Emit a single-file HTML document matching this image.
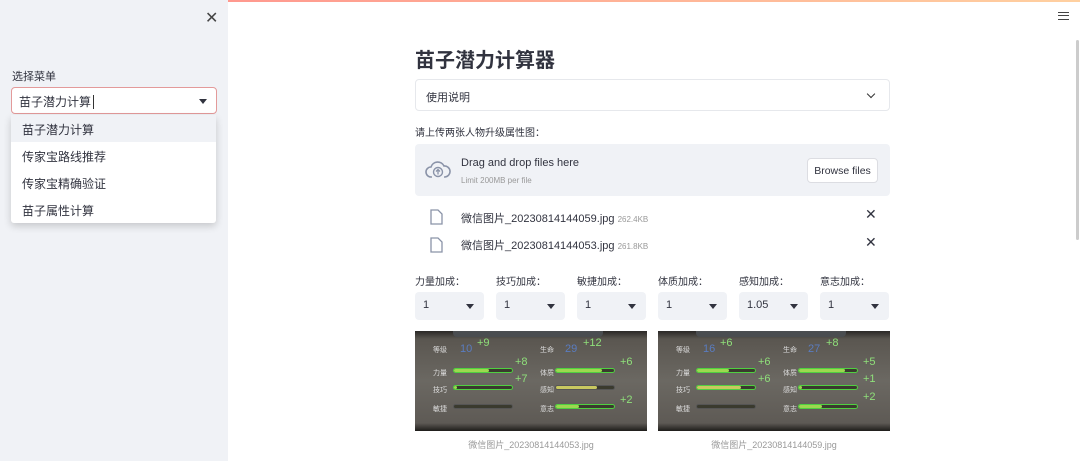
<!DOCTYPE html>
<html><head><meta charset="utf-8"><style>
*{box-sizing:border-box;margin:0;padding:0}
body{width:1080px;height:461px;overflow:hidden;background:#fff;font-family:"Liberation Sans","Noto Sans CJK SC",sans-serif;color:#31333f;position:relative}
.topbar{position:absolute;left:0;top:0;width:1080px;height:2px;background:linear-gradient(90deg,#ff8a8a,#ffd0a0)}
.side{position:absolute;left:0;top:0;width:228px;height:461px;background:#f0f2f6}
.abs{position:absolute}
.sel{position:absolute;background:#f0f2f6;border-radius:4px;height:28px;font-size:11px;color:#31333f;padding:7px 8px}
.sel:after{content:"";position:absolute;right:10px;top:12px;border:4px solid transparent;border-top:5px solid #31333f}
.game{position:absolute;top:331px;width:232px;height:100px;background:linear-gradient(180deg,#2a2826 0,#5a5650 8%,#6b6862 50%,#5e5a55 92%,#1e1c1a 100%)}
.bar{position:absolute;height:5px;border-radius:3px;background:#3a3a2e;border:1px solid #4fd040}
.bar i{display:block;height:100%;background:#9cd850;border-radius:3px}
.g{position:absolute;color:#8fe07a;font-size:11px}
.w{position:absolute;color:#ddd;font-size:7px}
</style></head><body>
<div class="topbar"></div>
<div class="side">
 <div class="abs" style="left:205px;top:8px;font-size:16px;color:#444">✕</div>
 <div class="abs" style="left:12px;top:68px;font-size:11px">选择菜单</div>
 <div class="abs" style="left:11px;top:87px;width:206px;height:27px;background:#fff;border:1px solid #e39a9a;border-radius:4px;font-size:12px;padding:5px 7px">苗子潜力计算<span style="border-left:1px solid #333;margin-left:2px"></span>
  <div class="abs" style="right:9px;top:11px;border:4px solid transparent;border-top:5px solid #31333f"></div></div>
 <div class="abs" style="left:11px;top:115px;width:205px;height:108px;background:#fff;border-radius:3px;box-shadow:0 3px 8px rgba(0,0,0,.18);font-size:12px">
  <div style="height:27px;background:#f0f2f6;padding:6px 11px">苗子潜力计算</div>
  <div style="height:27px;padding:6px 11px">传家宝路线推荐</div>
  <div style="height:27px;padding:6px 11px">传家宝精确验证</div>
  <div style="height:27px;padding:6px 11px">苗子属性计算</div>
 </div>
</div>
<div class="abs" style="left:1058px;top:12px;width:11px;height:8px;border-top:1.5px solid #444;border-bottom:1.5px solid #444"><div style="margin-top:2px;border-top:1.5px solid #444"></div></div>
<div class="abs" style="left:1076px;top:40px;width:3px;height:200px;background:#ccc;border-radius:2px"></div>
<div class="abs" style="left:415px;top:44px;font-size:20px;font-weight:bold">苗子潜力计算器</div>
<div class="abs" style="left:415px;top:79px;width:475px;height:32px;border:1px solid #e6e8ec;border-radius:4px;font-size:11px;padding:9px 10px">使用说明
 <div class="abs" style="right:15px;top:11px;width:6px;height:6px;border-right:1.5px solid #333;border-bottom:1.5px solid #333;transform:rotate(45deg)"></div></div>
<div class="abs" style="left:415px;top:124px;font-size:10px">请上传两张人物升级属性图：</div>
<div class="abs" style="left:415px;top:144px;width:475px;height:52px;background:#f0f2f6;border-radius:4px">
 <svg class="abs" style="left:10px;top:16px" width="26" height="20" viewBox="0 0 26 20"><path d="M7 17H6a5 5 0 0 1 0-10 7 7 0 0 1 13-1 5.5 5.5 0 0 1 1 11h-1" fill="none" stroke="#8a93a8" stroke-width="1.6"/><circle cx="13" cy="12" r="4.5" fill="none" stroke="#8a93a8" stroke-width="1.4"/><path d="M13 14.5v-5M11 11.5l2-2 2 2" fill="none" stroke="#8a93a8" stroke-width="1.3"/></svg>
 <div class="abs" style="left:46px;top:13px;font-size:11px">Drag and drop files here</div>
 <div class="abs" style="left:46px;top:32px;font-size:8px;color:#999">Limit 200MB per file</div>
 <div class="abs" style="left:392px;top:14px;width:71px;height:25px;background:#fff;border:1px solid #dcdde2;border-radius:4px;font-size:10.5px;padding:6px 0;text-align:center">Browse files</div>
</div>
<svg class="abs" style="left:430px;top:209px" width="13" height="16"><path d="M1 1h7l4 4v10H1z" fill="none" stroke="#8a93a8" stroke-width="1.3"/></svg>
<div class="abs" style="left:461px;top:210px;font-size:11px">微信图片_20230814144059.jpg <span style="font-size:8px;color:#999">262.4KB</span></div>
<div class="abs" style="left:865px;top:206px;font-size:14px">✕</div>
<svg class="abs" style="left:430px;top:237px" width="13" height="16"><path d="M1 1h7l4 4v10H1z" fill="none" stroke="#8a93a8" stroke-width="1.3"/></svg>
<div class="abs" style="left:461px;top:237px;font-size:11px">微信图片_20230814144053.jpg <span style="font-size:8px;color:#999">261.8KB</span></div>
<div class="abs" style="left:865px;top:234px;font-size:14px">✕</div>
<div class="abs" style="top:273px;left:415px;font-size:10px">力量加成：</div>
<div class="abs" style="top:273px;left:496px;font-size:10px">技巧加成：</div>
<div class="abs" style="top:273px;left:577px;font-size:10px">敏捷加成：</div>
<div class="abs" style="top:273px;left:658px;font-size:10px">体质加成：</div>
<div class="abs" style="top:273px;left:739px;font-size:10px">感知加成：</div>
<div class="abs" style="top:273px;left:820px;font-size:10px">意志加成：</div>
<div class="sel" style="left:415px;top:292px;width:69px">1</div>
<div class="sel" style="left:496px;top:292px;width:69px">1</div>
<div class="sel" style="left:577px;top:292px;width:69px">1</div>
<div class="sel" style="left:658px;top:292px;width:69px">1</div>
<div class="sel" style="left:739px;top:292px;width:69px">1.05</div>
<div class="sel" style="left:820px;top:292px;width:69px">1</div>
<div class="game" style="left:415px">
 <div class="abs" style="left:38px;top:0;width:150px;height:6px;background:#4a4d50;border-radius:0 0 4px 4px"></div>
 <div class="w" style="left:18px;top:14px">等级</div><div class="abs" style="left:45px;top:12px;color:#5a7cc0;font-size:11px">10</div><div class="g" style="left:62px;top:6px">+9</div>
 <div class="w" style="left:125px;top:14px">生命</div><div class="abs" style="left:150px;top:12px;color:#5a7cc0;font-size:11px">29</div><div class="g" style="left:168px;top:6px">+12</div>
 <div class="w" style="left:18px;top:37px">力量</div><div class="bar" style="left:38px;top:37px;width:60px"><i style="width:60%"></i></div>
 <div class="w" style="left:18px;top:54px">技巧</div><div class="bar" style="left:38px;top:54px;width:60px"><i style="width:5%"></i></div>
 <div class="w" style="left:18px;top:73px">敏捷</div><div class="bar" style="left:38px;top:73px;width:60px;border-color:#555"></div>
 <div class="g" style="left:100px;top:25px">+8</div><div class="g" style="left:100px;top:42px">+7</div>
 <div class="w" style="left:125px;top:37px">体质</div><div class="bar" style="left:140px;top:37px;width:60px"><i style="width:80%"></i></div>
 <div class="w" style="left:125px;top:54px">感知</div><div class="bar" style="left:140px;top:54px;width:60px;border-color:#555"><i style="width:70%;background:#c8c860"></i></div>
 <div class="w" style="left:125px;top:73px">意志</div><div class="bar" style="left:140px;top:73px;width:60px"><i style="width:40%"></i></div>
 <div class="g" style="left:205px;top:25px">+6</div><div class="g" style="left:205px;top:63px">+2</div>
</div>
<div class="game" style="left:658px">
 <div class="abs" style="left:38px;top:0;width:150px;height:6px;background:#4a4d50;border-radius:0 0 4px 4px"></div>
 <div class="w" style="left:18px;top:14px">等级</div><div class="abs" style="left:45px;top:12px;color:#5a7cc0;font-size:11px">16</div><div class="g" style="left:62px;top:6px">+6</div>
 <div class="w" style="left:125px;top:14px">生命</div><div class="abs" style="left:150px;top:12px;color:#5a7cc0;font-size:11px">27</div><div class="g" style="left:168px;top:6px">+8</div>
 <div class="w" style="left:18px;top:37px">力量</div><div class="bar" style="left:38px;top:37px;width:60px"><i style="width:55%"></i></div>
 <div class="w" style="left:18px;top:54px">技巧</div><div class="bar" style="left:38px;top:54px;width:60px"><i style="width:75%;background:#c8c860"></i></div>
 <div class="w" style="left:18px;top:73px">敏捷</div><div class="bar" style="left:38px;top:73px;width:60px;border-color:#555"></div>
 <div class="g" style="left:100px;top:25px">+6</div><div class="g" style="left:100px;top:42px">+6</div>
 <div class="w" style="left:125px;top:37px">体质</div><div class="bar" style="left:140px;top:37px;width:60px"><i style="width:80%"></i></div>
 <div class="w" style="left:125px;top:54px">感知</div><div class="bar" style="left:140px;top:54px;width:60px"><i style="width:5%"></i></div>
 <div class="w" style="left:125px;top:73px">意志</div><div class="bar" style="left:140px;top:73px;width:60px"><i style="width:40%"></i></div>
 <div class="g" style="left:205px;top:25px">+5</div><div class="g" style="left:205px;top:42px">+1</div><div class="g" style="left:205px;top:60px">+2</div>
</div>
<div class="abs" style="left:415px;top:438px;width:232px;text-align:center;font-size:9px;color:#999">微信图片_20230814144053.jpg</div>
<div class="abs" style="left:658px;top:438px;width:232px;text-align:center;font-size:9px;color:#999">微信图片_20230814144059.jpg</div>
</body></html>
